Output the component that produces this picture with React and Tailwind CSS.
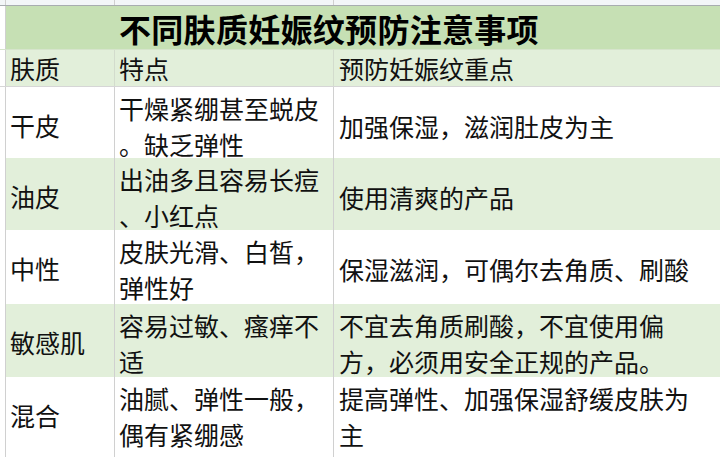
import React from 'react';

const rows = [
    { skin: '干皮', trait: ['干燥紧绷甚至蜕皮', '。缺乏弹性'], tip: ['加强保湿，滋润肚皮为主'], h: 'h-[71px]', bg: 'bg-white' },
    { skin: '油皮', trait: ['出油多且容易长痘', '、小红点'], tip: ['使用清爽的产品'], h: 'h-[72px]', bg: 'bg-[#e2efda]' },
    { skin: '中性', trait: ['皮肤光滑、白皙，', '弹性好'], tip: ['保湿滋润，可偶尔去角质、刷酸'], h: 'h-[74px]', bg: 'bg-white' },
    { skin: '敏感肌', trait: ['容易过敏、瘙痒不', '适'], tip: ['不宜去角质刷酸，不宜使用偏', '方，必须用安全正规的产品。'], h: 'h-[73px]', bg: 'bg-[#e2efda]' },
    { skin: '混合', trait: ['油腻、弹性一般，', '偶有紧绷感'], tip: ['提高弹性、加强保湿舒缓皮肤为', '主'], h: 'h-[73px]', bg: 'bg-white' },
];

const Lines = ({ lines }) => (
    <div className="whitespace-nowrap">
        {lines.map((l, i) => (
            <div key={i}>{l}</div>
        ))}
    </div>
);

const Row = ({ row }) => (
    <div className={`grid grid-cols-[6px_109px_219px_1fr] border-b border-[#d6d6d6] ${ row.h }`}>
        <div className="border-r border-[#d0d0d0] bg-white"></div>
        <div className={`flex items-center pl-[4px] border-r border-[#d0d0d0] ${ row.bg }`}>{row.skin}</div>
        <div className={`flex items-center pl-[4px] pt-[3px] border-r border-[#d0d0d0] ${ row.bg }`}>
            <Lines lines={row.trait} />
        </div>
        <div className={`flex items-center pl-[5px] pt-[3px] ${ row.bg }`}>
            <Lines lines={row.tip} />
        </div>
    </div>
);

export default function App() {
    return (
        <div
            className="w-[720px] h-[457px] overflow-hidden bg-white text-[25px] leading-[36px] text-[#111]"
            style={{ fontFamily: '"Noto Sans CJK SC", "Microsoft YaHei", sans-serif' }}
        >
            {/* strip of the row above */}
            <div className="grid grid-cols-[6px_109px_219px_1fr] h-[6px] border-b border-[#a8adb0] bg-[#f3f6f8]">
                <div className="border-r border-[#d0d0d0]"></div>
                <div className="border-r border-[#d0d0d0]"></div>
                <div className="border-r border-[#d0d0d0]"></div>
                <div></div>
            </div>

            {/* title */}
            <div className="grid grid-cols-[6px_1fr] h-[44px] border-b border-[#d6e4cc]">
                <div className="border-r border-[#d0d0d0] bg-white"></div>
                <div className="flex items-center pl-[113px] bg-[#c6e0b4] text-[32px] font-bold tracking-[0.3px] text-black">
                    不同肤质妊娠纹预防注意事项
                </div>
            </div>

            {/* header */}
            <div className="grid grid-cols-[6px_109px_219px_1fr] h-[37px] border-b border-[#d6d6d6] bg-[#e2efda]">
                <div className="border-r border-[#d0d0d0] bg-white"></div>
                <div className="flex items-center pl-[4px] border-r border-[#d3dccd]">肤质</div>
                <div className="flex items-center pl-[4px] border-r border-[#d3dccd]">特点</div>
                <div className="flex items-center pl-[5px]">预防妊娠纹重点</div>
            </div>

            {rows.map(row => (
                <Row key={row.skin} row={row} />
            ))}

            {/* next empty row */}
            <div className="grid grid-cols-[6px_109px_219px_1fr] h-[7px] bg-white">
                <div className="border-r border-[#d0d0d0]"></div>
                <div className="border-r border-[#d0d0d0]"></div>
                <div className="border-r border-[#d0d0d0]"></div>
                <div></div>
            </div>
        </div>
    );
}
